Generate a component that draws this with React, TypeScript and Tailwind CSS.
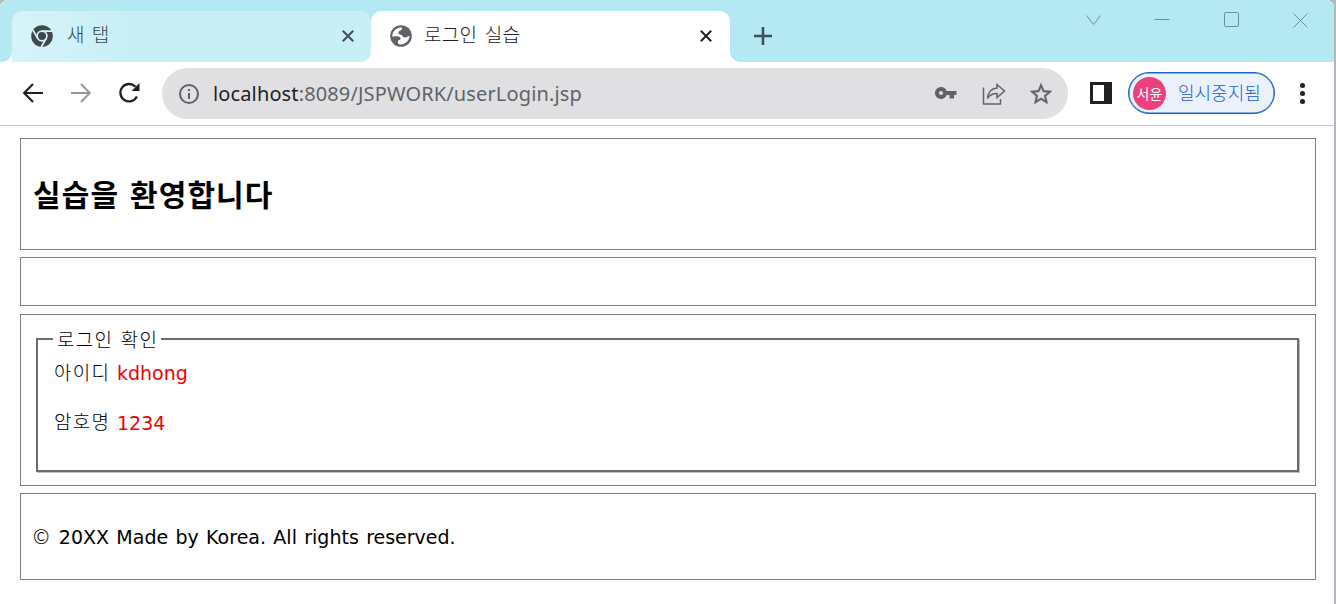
import React from "react";

const ko = "font-['Noto_Sans_CJK_KR',sans-serif]";

function CloseIcon({ className }: { className: string }) {
  return (
    <svg viewBox="0 0 12 12" className={"mb-[2px] h-3 w-3 " + className} fill="none" stroke="currentColor" strokeWidth="2">
      <path d="M0.8 0.8 11.2 11.2M11.2 0.8 0.8 11.2" />
    </svg>
  );
}

function TabStrip() {
  return (
    <div className="flex h-[62px] bg-white">
      <div className="w-3 rounded-br-[10px] bg-[#b4e8f2]" />
      <div className="flex flex-1 bg-[#b4e8f2]">
        <div className="flex h-[51px] w-[359px] self-end bg-white bg-linear-to-b from-[#b4e8f2] from-50% to-white to-50%">
          <div className="flex h-[51px] w-[359px] items-center rounded-t-[10px] rounded-br-[10px] bg-[#c7eff5] bg-linear-to-r from-[#d6f3f9] to-[#c7eff5] to-35% pl-[18px] pr-[17px]">
            <svg viewBox="0 0 24 24" className="mb-[2px] h-6 w-6 text-[#3f484c]">
              <circle cx="12" cy="12" r="10.8" fill="currentColor" />
              <circle cx="12" cy="12" r="4.9" fill="none" stroke="#d5f3f8" strokeWidth="1.7" />
              <path d="M12 7.1H22M7.8 14.5 2.8 5.8M16.2 14.5 11.2 23" fill="none" stroke="#d5f3f8" strokeWidth="1.7" />
            </svg>
            <span className={ko + " ml-[13px] flex-1 pb-[5px] text-[19px] leading-6 font-light text-[#33464d] [word-spacing:3px]"}>새 탭</span>
            <CloseIcon className="text-[#3d5157]" />
          </div>
        </div>
        <div className="mt-[11px] flex h-[51px] w-[359px] items-center rounded-t-[10px] bg-white pl-[18px] pr-[18px]">
          <svg viewBox="0 0 24 24" className="mb-[2px] h-6 w-6">
            <circle cx="12" cy="12" r="10.8" fill="#5f6368" />
            <path
              d="M13.200 3.500C9.500 3 5.200 5.500 3.800 9.200 3.200 11 3.300 12.300 3.600 12.700 6 12.300 9.500 12 11 13.200 12.300 14.400 11.300 15.800 9.800 16.300 8.600 16.800 8.600 18.800 9.300 20.100 14.500 21.500 20 18 20.600 12 18.500 11.800 18 13.800 15.800 13.600 13.600 13.400 13.800 11.300 12 10.700 10.400 10.200 8.900 9.900 9.400 8.200 9.900 6.700 12.800 7 13.200 3.500Z"
              fill="#fff"
            />
          </svg>
          <span className={ko + " ml-[11px] flex-1 pb-[5px] text-[19px] leading-6 font-light tracking-[0.3px] text-[#202124] [word-spacing:3px]"}>로그인 실습</span>
          <CloseIcon className="text-[#202124]" />
        </div>
        <div className="flex flex-1 bg-white">
          <div className="flex flex-1 rounded-bl-[10px] bg-[#b4e8f2] pt-[27px] pl-6">
            <svg viewBox="0 0 18 18" className="h-[18px] w-[18px] text-[#3d5157]" stroke="currentColor" strokeWidth="2.6">
              <path d="M9 0V18M0 9H18" />
            </svg>
          </div>
        </div>
        <div className="flex items-start gap-[53px] pt-3 pr-[26px] text-[#6b8f98]">
          <svg viewBox="0 0 16 16" className="h-4 w-4" fill="none" stroke="currentColor">
            <path d="M1.500 3.500 8.500 12.500 15.500 3.500" />
          </svg>
          <svg viewBox="0 0 16 16" className="h-4 w-4" fill="none" stroke="currentColor">
            <path d="M.5 7.500H15.500" />
          </svg>
          <svg viewBox="0 0 16 16" className="h-4 w-4" fill="none" stroke="currentColor">
            <rect x="1.500" y=".5" width="14" height="14" rx="1.500" />
          </svg>
          <svg viewBox="0 0 16 16" className="h-4 w-4" fill="none" stroke="currentColor">
            <path d="M1.500 1.500 15.500 15.500M15.500 1.500 1.500 15.500" />
          </svg>
        </div>
      </div>
    </div>
  );
}

function Toolbar() {
  return (
    <div className="flex h-16 items-center border-b border-[#c8c8ca] bg-white pl-[22px]">
      <svg viewBox="0 0 22 20" className="mb-[2px] h-5 w-[22px] text-[#202124]" fill="none" stroke="currentColor" strokeWidth="2.200">
        <path d="M21 10H2.500M11 1 2.200 10 11 19" />
      </svg>
      <svg viewBox="0 0 22 20" className="mb-[2px] ml-[26px] h-5 w-[22px] text-[#98989a]" fill="none" stroke="currentColor" strokeWidth="2">
        <path d="M1 10H19.500M11 1 19.800 10 11 19" />
      </svg>
      <svg viewBox="0 0 22 22" className="mb-[2px] ml-[26px] h-[22px] w-[22px] text-[#202124]" fill="none" stroke="currentColor" strokeWidth="2.300">
        <path d="M18.900 14.500A8.700 8.700 0 1 1 17.400 4.700" />
        <path d="M21.500 1V9H13.500Z" fill="currentColor" stroke="none" />
      </svg>
      <div className="ml-[22px] flex h-[51px] w-[906px] items-center rounded-full bg-[#e0e0e2] pl-[17px] pr-[16px] text-[#5f6368]">
        <svg viewBox="0 0 20 20" className="h-5 w-5" fill="none" stroke="currentColor" strokeWidth="2">
          <circle cx="10" cy="10" r="9" />
          <path d="M10 9V15M10 5V7" />
        </svg>
        <span className="ml-[14px] flex-1 font-['Noto_Sans',sans-serif] text-[20px] leading-7 tracking-[0.13px]">
          <span className="text-[#202124]">localhost</span>:8089/JSPWORK/userLogin.jsp
        </span>
        <svg viewBox="0 0 22 12" className="mr-[25px] mb-[2px] h-3 w-[22px]" fill="currentColor">
          <path fillRule="evenodd" d="M6 0a6 6 0 1 0 5.600 8H14.500v3.500h4.500V8h2.500V4H11.600A6 6 0 0 0 6 0Zm0 4a2 2 0 1 1 0 4 2 2 0 0 1 0-4Z" />
        </svg>
        <svg viewBox="0 0 24 22" className="mr-[24px] h-[22px] w-6" fill="none" stroke="currentColor" strokeWidth="1.500">
          <path d="M1.500 4.500V21H18.500V16" />
          <path d="M15 1.500 22.500 8 15 14.500V10.500C10 10.500 7.500 12 5.500 15.500 6 9 9.500 5.500 15 5Z" />
        </svg>
        <svg viewBox="2 2 20 19" className="h-[21px] w-[22px]" fill="currentColor" stroke="currentColor" strokeWidth=".3">
          <path d="m22 9.240-7.190-.62L12 2 9.190 8.630 2 9.240l5.460 4.730L5.820 21 12 17.270 18.180 21l-1.630-7.030L22 9.240zM12 15.400l-3.760 2.270 1-4.280-3.320-2.880 4.380-.38L12 6.100l1.710 4.040 4.380.38-3.320 2.880 1 4.280L12 15.400z" />
        </svg>
      </div>
      <div className="mb-[2px] ml-[22px] flex h-[22px] w-[22px] border-[3px] border-r-[8px] border-[#202124]" />
      <div className="mb-[2px] ml-4 flex h-[42px] w-[147px] items-center rounded-full border border-[#1a62c8] bg-[#eaf1fb] pl-1 shadow-[inset_0_0_0_0.5px_#1a62c8]">
        <div className={ko + " mt-px flex h-[33px] w-[33px] items-center justify-center rounded-full bg-[#ec407a] text-[14px] text-white"}>서윤</div>
        <span className={ko + " ml-3 pb-[2px] text-[18px] leading-6 font-light text-[#1a5fd0]"}>일시중지됨</span>
      </div>
      <div className="ml-[25px] flex flex-col gap-[3px] pb-px">
        <div className="h-[5px] w-[5px] rounded-full bg-[#202124]" />
        <div className="h-[5px] w-[5px] rounded-full bg-[#202124]" />
        <div className="h-[5px] w-[5px] rounded-full bg-[#202124]" />
      </div>
    </div>
  );
}

const body = "font-['DejaVu_Sans','Noto_Sans_CJK_KR',sans-serif]";

export default function App() {
  return (
    <div className="h-[604px] w-[1336px] overflow-hidden bg-[#b4b6ba]">
      <div className="h-[604px] w-[1334px] overflow-hidden rounded-t-[8px] bg-white">
        <TabStrip />
        <Toolbar />
        <main className={body + " flex flex-col pt-3 pr-[18px] pl-5 text-[19px] text-black"}>
          <header className="flex h-28 items-center border border-[#808080] pb-[2px] pl-3">
            <h1 className={ko + " text-[30px] font-bold tracking-[1.1px] [word-spacing:3px]"}>실습을 환영합니다</h1>
          </header>
          <nav className="mt-[7px] h-[49px] border border-[#808080]" />
          <section className="mt-2 h-[172px] border border-[#808080] px-[15px] pt-[11px]">
            <fieldset className="mr-px h-[146px] border-2 border-[#6c6c6c] px-[15px] shadow-[1px_1px_0_#c0c0c0]">
              <legend className={ko + " h-[26px] bg-white pr-[3px] pl-1 leading-[26px] font-light tracking-[1.3px] [word-spacing:2px]"}>로그인 확인</legend>
              <p className="flex h-[49px] items-baseline pt-[7px] pl-px leading-[26px]">
                <span className={ko + " w-[63px] font-light tracking-[1.300px]"}>아이디</span>
                <span className="pt-px text-[#f00000]">kdhong</span>
              </p>
              <p className="flex items-baseline pt-[7px] pl-px leading-[26px]">
                <span className={ko + " w-[63px] font-light tracking-[1.300px]"}>암호명</span>
                <span className="relative top-px text-[#f00000]">1234</span>
              </p>
            </fieldset>
          </section>
          <footer className="mt-[7px] flex h-[87px] items-center border border-[#808080] pl-3">
            <p className="pt-px [word-spacing:1.3px]">
              <span className={ko + " mr-[2px] text-[20px] leading-5 font-light"}>©</span> 20XX Made by Korea. All rights reserved.
            </p>
          </footer>
        </main>
      </div>
    </div>
  );
}
